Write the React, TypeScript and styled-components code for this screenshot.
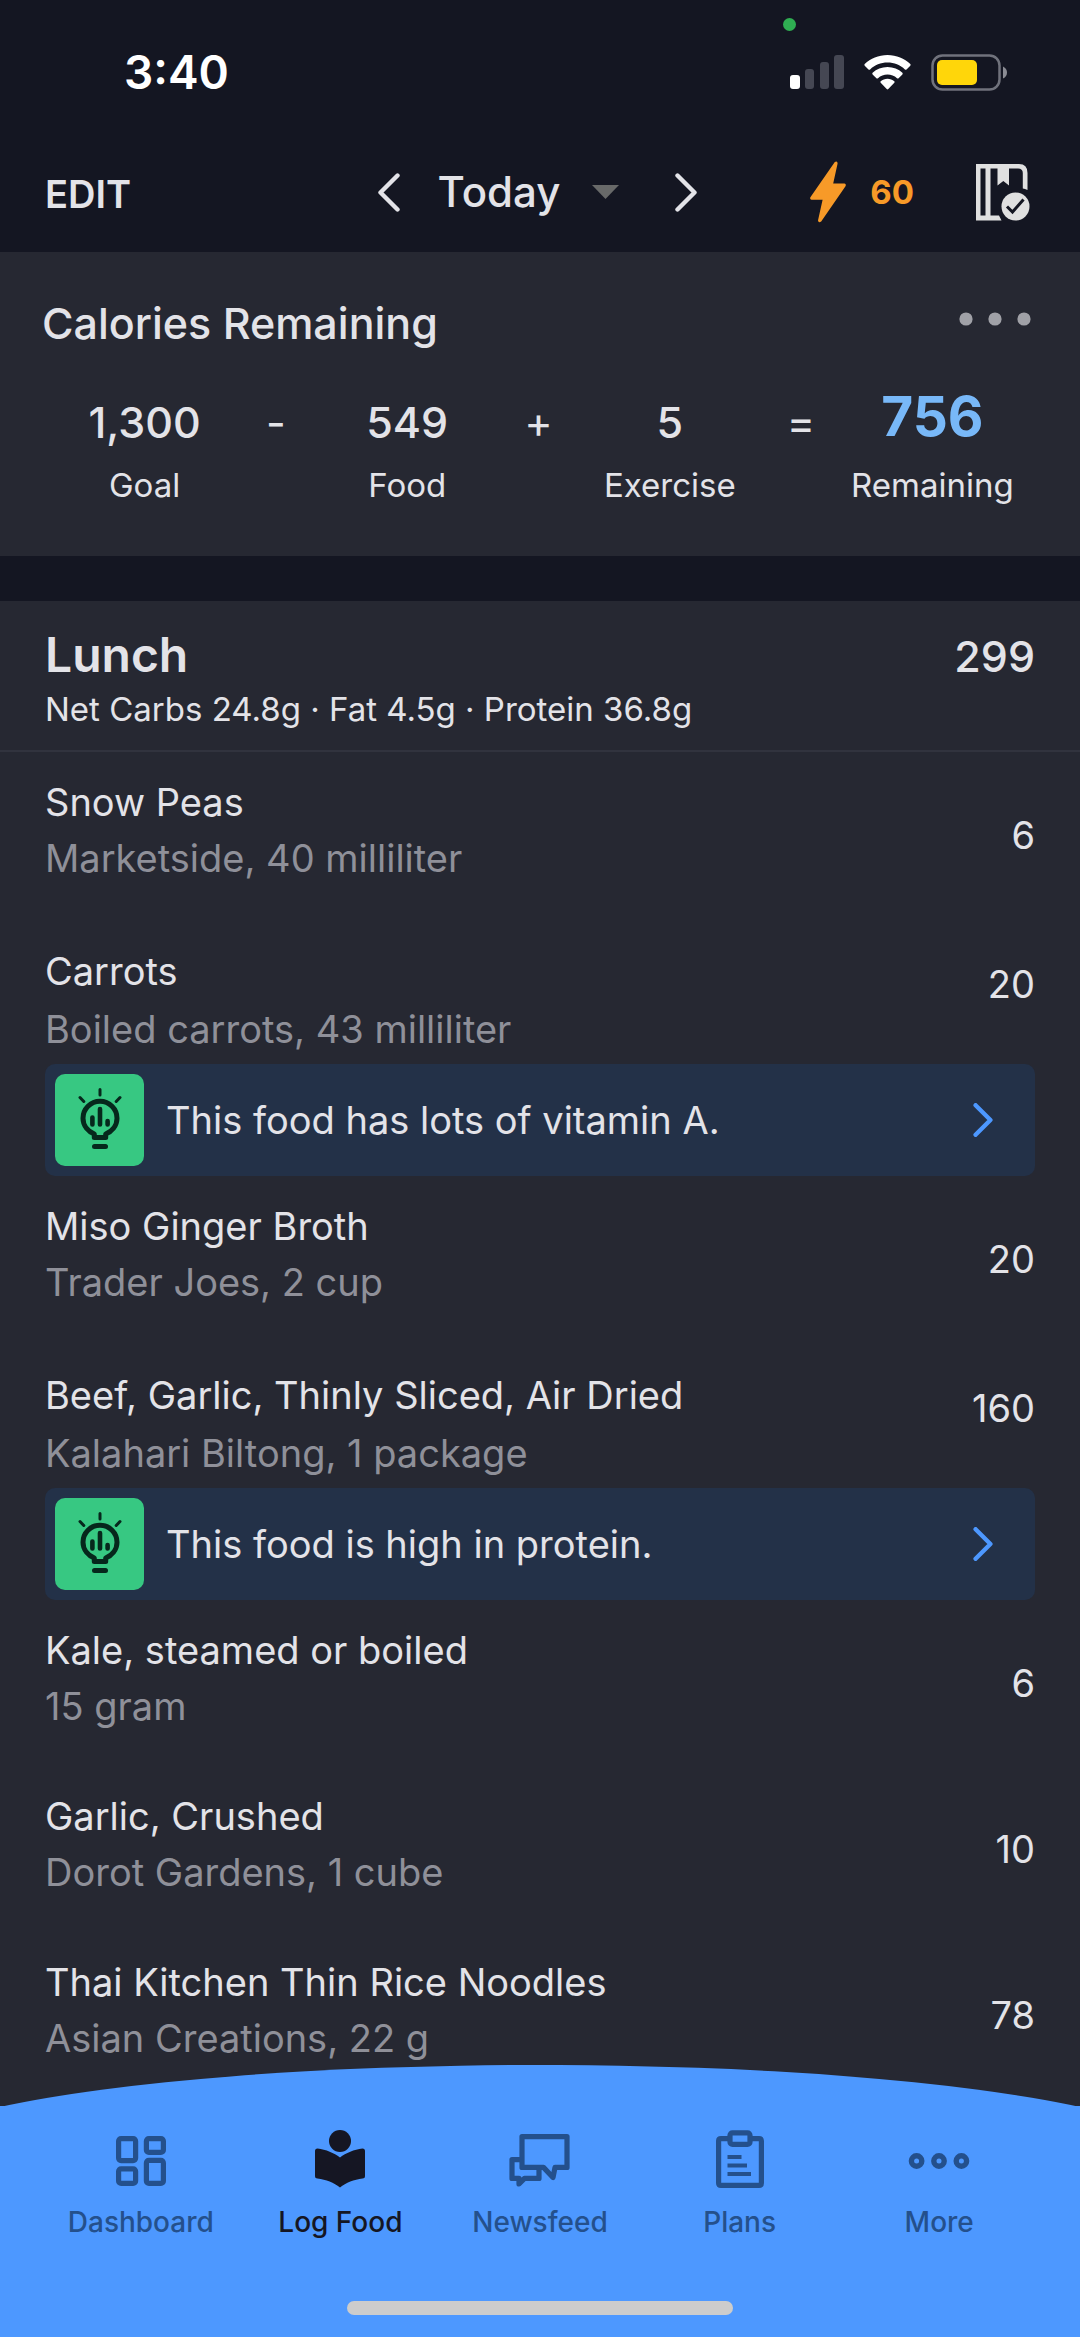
import React from "react";
import styled, { createGlobalStyle } from "styled-components";

const color = {
  bar: "#141622",
  card: "#262832",
  line: "#31333e",
  text: "#e3e3e8",
  muted: "#8f9099",
  accent: "#4d98ff",
  remaining: "#78b8f8",
  tip: "#233148",
  green: "#37c882",
  orange: "#f79a28",
  navIdle: "#24508c",
  navActive: "#151623",
};

const GlobalStyle = createGlobalStyle`
  *, *::before, *::after { box-sizing: border-box; }
  body {
    margin: 0;
    background: ${color.card};
    color: ${color.text};
    font-family: Inter, "Liberation Sans", sans-serif;
  }
  h1, h2, h3, p, ul { margin: 0; padding: 0; }
  button { margin: 0; padding: 0; border: 0; background: none; color: inherit; font: inherit; }
  svg { display: block; flex: none; }
`;

const Page = styled.div`
  display: flex;
  flex-direction: column;
  min-height: 100vh;
`;

const Header = styled.header`
  background: ${color.bar};
`;

const StatusBar = styled.div`
  position: relative;
  display: flex;
  align-items: center;
  justify-content: space-between;
  height: 144px;
  padding: 0 72px 0 124px;
`;

const Clock = styled.span`
  font-size: 46px;
  line-height: 56px;
  font-weight: 600;
  color: #fff;
`;

const StatusIcons = styled.div`
  display: flex;
  align-items: center;
  gap: 20px;
`;

const CameraDot = styled.span`
  position: absolute;
  top: 18px;
  right: 284px;
  width: 13px;
  height: 13px;
  border-radius: 50%;
  background: #2fae52;
`;

const Toolbar = styled.div`
  display: grid;
  grid-template-columns: 1fr auto 1fr;
  align-items: center;
  height: 108px;
  padding: 0 50px 12px 45px;
`;

const EditButton = styled.button`
  justify-self: start;
  padding-top: 4px;
  font-size: 38px;
  line-height: 48px;
  font-weight: 600;
`;

const DayPicker = styled.div`
  display: flex;
  align-items: center;
  gap: 38px;
`;

const DayButton = styled.button`
  display: flex;
  align-items: center;
  gap: 32px;
  padding-right: 18px;
  font-size: 42px;
  line-height: 48px;
  font-weight: 500;
`;

const ToolbarEnd = styled.div`
  justify-self: end;
  display: flex;
  align-items: center;
  gap: 62px;
`;

const Streak = styled.button`
  display: flex;
  align-items: center;
  gap: 24px;
  font-size: 33px;
  line-height: 48px;
  font-weight: 700;
  color: ${color.orange};
`;

const Summary = styled.section`
  padding: 43px 45px 47px 42px;
  border-bottom: 45px solid ${color.bar};
`;

const SummaryHead = styled.div`
  display: flex;
  justify-content: space-between;
  padding-right: 4px;
`;

const SummaryTitle = styled.h1`
  font-size: 43px;
  line-height: 56px;
  font-weight: 500;
`;

const MenuButton = styled.button`
  height: 48px;
`;

const Equation = styled.div`
  display: grid;
  grid-template-columns: repeat(7, minmax(0, 1fr));
  margin: 37px 37px 0;
`;

const Term = styled.div`
  display: flex;
  flex-direction: column;
  align-items: center;
  gap: 5px;
  white-space: nowrap;
`;

const TermValue = styled.strong<{ $result?: boolean }>`
  font-size: ${(p) => (p.$result ? 55 : 43)}px;
  line-height: ${(p) => (p.$result ? 56 : 68)}px;
  height: 68px;
  font-weight: ${(p) => (p.$result ? 700 : 500)};
  color: ${(p) => (p.$result ? color.remaining : "inherit")};
`;

const TermLabel = styled.span`
  font-size: 33px;
  line-height: 48px;
`;

const Operator = styled.span`
  justify-self: center;
  font-size: 43px;
  line-height: 68px;
`;

const MealHead = styled.div`
  display: grid;
  grid-template-columns: 1fr auto;
  padding: 24px 45px 17px;
  border-bottom: 2px solid ${color.line};
`;

const MealTitle = styled.h2`
  font-size: 48px;
  line-height: 60px;
  font-weight: 600;
`;

const MealTotal = styled.span`
  font-size: 43px;
  line-height: 62px;
  font-weight: 500;
`;

const Macros = styled.p`
  grid-column: 1 / -1;
  margin-top: -2px;
  font-size: 33px;
  line-height: 48px;
`;

const FoodList = styled.ul`
  list-style: none;
`;

const FoodItem = styled.li`
  padding: 0 45px;
`;

const FoodRow = styled.div`
  display: flex;
  align-items: center;
  justify-content: space-between;
`;

const FoodText = styled.div<{ $tip: boolean }>`
  font-size: 38px;
  line-height: ${(p) => (p.$tip ? 58 : 56)}px;
  padding: ${(p) => (p.$tip ? "24px 0 6px" : "22px 0 32px")};
`;

const FoodName = styled.h3`
  font: inherit;
`;

const FoodDetail = styled.p`
  color: ${color.muted};
`;

const FoodCalories = styled.span<{ $tip: boolean }>`
  font-size: 38px;
  line-height: 48px;
  padding-bottom: ${(p) => (p.$tip ? 14 : 0)}px;
`;

const Tip = styled.button`
  display: flex;
  align-items: center;
  width: 100%;
  padding: 10px 42px 10px 10px;
  border-radius: 10px;
  background: ${color.tip};
  font-size: 38px;
  line-height: 48px;
  text-align: left;
`;

const TipBadge = styled.span`
  display: grid;
  place-items: center;
  width: 89px;
  height: 92px;
  margin-right: 22px;
  border-radius: 10px;
  background: ${color.green};
`;

const TipText = styled.span`
  flex: 1;
`;

const TabBar = styled.nav`
  position: sticky;
  bottom: 0;
  margin-top: -33px;
`;

const TabArc = styled.svg`
  width: 100%;
  height: 42px;
  margin-bottom: -1px;
`;

const TabPanel = styled.div`
  padding: 24px 41px 22px;
  background: ${color.accent};
`;

const Tabs = styled.div`
  display: grid;
  grid-template-columns: repeat(5, 1fr);
`;

const Tab = styled.button<{ $active?: boolean }>`
  display: flex;
  flex-direction: column;
  align-items: center;
  gap: 10px;
  font-size: 28px;
  line-height: 40px;
  font-weight: 500;
  color: ${(p) => (p.$active ? color.navActive : color.navIdle)};
`;

const HomeIndicator = styled.div`
  width: 386px;
  height: 14px;
  margin: 59px auto 0;
  border-radius: 7px;
  background: #ccc;
`;

const SignalIcon = () => (
  <svg width="54" height="34" viewBox="0 0 54 34" fill="#454753">
    <rect x="0" y="20" width="10" height="14" rx="3" fill="#fff" />
    <rect x="15" y="14" width="9" height="20" rx="3" />
    <rect x="30" y="7" width="9" height="27" rx="3" />
    <rect x="44" y="0" width="10" height="34" rx="3" />
  </svg>
);

const WifiIcon = () => (
  <svg width="47" height="35" viewBox="0 0 47 35" fill="#fff">
    <path d="M23.5 0C32.5 0 40.5 3.5 46.3 9.1Q47 9.9 46.3 10.7L42.5 14.5Q41.7 15.2 40.9 14.5C36.3 10.2 30.2 7.6 23.5 7.6S10.7 10.2 6.1 14.5Q5.3 15.2 4.5 14.5L.7 10.7Q0 9.9 .7 9.1C6.5 3.5 14.5 0 23.5 0Z" />
    <path d="M23.5 12C29.3 12 34.5 14.2 38.4 17.8Q39.1 18.6 38.4 19.4L34.6 23.2Q33.8 23.9 33 23.2C30.4 21 27.1 19.6 23.5 19.6S16.6 21 14 23.2Q13.2 23.9 12.4 23.2L8.6 19.4Q7.9 18.6 8.6 17.8C12.5 14.2 17.7 12 23.5 12Z" />
    <path d="M23.5 23.8C26 23.8 28.5 24.7 30.3 26.2Q31.1 27 30.3 27.8L24.3 34Q23.5 34.8 22.7 34L16.7 27.8Q15.9 27 16.7 26.2C18.5 24.7 21 23.8 23.5 23.8Z" />
  </svg>
);

const BatteryIcon = () => (
  <svg width="77" height="37" viewBox="0 0 77 37">
    <rect x="1.5" y="1.5" width="67" height="34" rx="10" fill="none" stroke="#70727c" strokeWidth="2.5" />
    <rect x="6" y="6" width="40" height="25" rx="5" fill="#ffd60a" />
    <path d="M72 12.5Q76 14.5 76 18.5T72 24.5Z" fill="#8a8b93" />
  </svg>
);

const Chevron = ({ back, small }: { back?: boolean; small?: boolean }) => (
  <svg
    width={small ? 20 : 22}
    height={small ? 34 : 39}
    viewBox="0 0 22 39"
    fill="none"
    stroke={small ? color.accent : "currentColor"}
    strokeWidth={small ? 5 : 4.4}
    strokeLinecap="round"
    strokeLinejoin="round"
  >
    <path d={back ? "M19.5 2.5L2.5 19.5L19.5 36.5" : "M2.5 2.5L19.5 19.5L2.5 36.5"} />
  </svg>
);

const Caret = () => (
  <svg width="27" height="14" viewBox="0 0 27 14" fill="#686969">
    <path d="M0 0H27L13.5 14Z" />
  </svg>
);

const BoltIcon = () => (
  <svg width="36" height="62" viewBox="0 0 36 62" fill={color.orange}>
    <path d="M24.8 1Q27.5 -.5 27.6 2.5L23.2 22.5H34.5Q36.5 23 35.5 25.2L11.2 60.5Q8.5 62.5 8 59.5L12.6 38.8H1.5Q-.5 38.3 .4 36.2Z" />
  </svg>
);

const DiaryIcon = () => (
  <svg width="54" height="57" viewBox="0 0 54 57" fill="#e0e0e0">
    <path
      fillRule="evenodd"
      d="M0 0H43Q51.5 0 51.5 9V26Q49 24.5 46.8 24.5V9Q46.8 4.5 42 4.5H33V21.5L27.3 17L21.5 21.5V4.5H14.5V51.5H23L25.5 56.5H0ZM4.5 4.5V51.5H9.5V4.5Z"
    />
    <circle cx="39.5" cy="42.5" r="14" />
    <path d="M31 42.5L36.5 48L47.5 35.5" fill="none" stroke={color.bar} strokeWidth="3" />
  </svg>
);

const DotsIcon = () => (
  <svg width="72" height="14" viewBox="0 0 72 14" fill="#a0a1a7">
    <circle cx="7" cy="7" r="6.6" />
    <circle cx="36" cy="7" r="6.6" />
    <circle cx="65" cy="7" r="6.6" />
  </svg>
);

const BulbIcon = () => (
  <svg width="44" height="64" viewBox="0 0 44 64" fill="none" stroke="#06281c" strokeLinecap="round" strokeLinejoin="round">
    <path strokeWidth="3" d="M22 1.5V7M2 9.5L5.8 13.5M42 9.5L38.2 13.5" />
    <path strokeWidth="5" d="M16.3 49.5H27.7V46C33.5 43.5 39 38 39 30.2A17 17 0 0 0 5 30.2C5 38 10.5 43.5 16.3 46Z" />
    <path strokeWidth="5" d="M16.5 58.4H27.5" />
    <path strokeWidth="4.6" d="M14.4 29.5V36.4M22 21V36.4M29.6 33V36.4" />
  </svg>
);

const DashboardIcon = () => (
  <svg width="62" height="62" viewBox="0 0 62 62" fill="none" stroke="currentColor" strokeWidth="5.2">
    <rect x="8.6" y="8.6" width="17" height="22" rx="2.5" />
    <rect x="36.4" y="8.6" width="17" height="13.8" rx="2.5" />
    <rect x="8.6" y="38.8" width="17" height="14.6" rx="2.5" />
    <rect x="36.4" y="30.4" width="17" height="23" rx="2.5" />
  </svg>
);

const LogFoodIcon = () => (
  <svg width="62" height="62" viewBox="0 0 62 62" fill="currentColor">
    <circle cx="31" cy="11" r="11" />
    <path d="M31 27.5C25 23 17 19.500 8.5 18.5Q6 18.500 6 21V46Q6 48.5 8.500 48.5C17 49.5 25 52.5 31 57.500C37 52.5 45 49.5 53.5 48.5Q56 48.5 56 46V21Q56 18.5 53.5 18.5C45 19.5 37 23 31 27.5Z" />
  </svg>
);

const NewsfeedIcon = () => (
  <svg width="62" height="62" viewBox="0 0 62 62" fill="none" stroke="currentColor" strokeWidth="5.2" strokeLinejoin="round">
    <path d="M13 6.6H58V37.4H46L44 47.5L34.5 37.4H13Z" />
    <path d="M13 29.6H3V48.4H10V54L15.5 48.4H30V38" />
  </svg>
);

const PlansIcon = () => (
  <svg width="62" height="62" viewBox="0 0 62 62" fill="none" stroke="currentColor" strokeWidth="5.2">
    <path strokeLinejoin="round" d="M20 8.6H12Q9.6 8.6 9.6 11V53Q9.6 55.4 12 55.4H50Q52.4 55.4 52.4 53V11Q52.4 8.6 50 8.6H42" />
    <rect x="21" y="2.8" width="20" height="11.6" rx="2.5" />
    <path strokeWidth="4" d="M18.5 27H32.5M18.5 35.5H38M18.5 44H42" />
  </svg>
);

const MoreIcon = () => (
  <svg width="62" height="62" viewBox="0 0 62 62" fill="none" stroke="currentColor" strokeWidth="5.4">
    <circle cx="8.6" cy="31" r="5.2" />
    <circle cx="31" cy="31" r="5.2" />
    <circle cx="53.4" cy="31" r="5.2" />
  </svg>
);

const foods = [
  { name: "Snow Peas", detail: "Marketside, 40 milliliter", calories: 6 },
  { name: "Carrots", detail: "Boiled carrots, 43 milliliter", calories: 20, tip: "This food has lots of vitamin A." },
  { name: "Miso Ginger Broth", detail: "Trader Joes, 2 cup", calories: 20 },
  {
    name: "Beef, Garlic, Thinly Sliced, Air Dried",
    detail: "Kalahari Biltong, 1 package",
    calories: 160,
    tip: "This food is high in protein.",
  },
  { name: "Kale, steamed or boiled", detail: "15 gram", calories: 6 },
  { name: "Garlic, Crushed", detail: "Dorot Gardens, 1 cube", calories: 10 },
  { name: "Thai Kitchen Thin Rice Noodles", detail: "Asian Creations, 22 g", calories: 78 },
];

const tabs = [
  { label: "Dashboard", Icon: DashboardIcon },
  { label: "Log Food", Icon: LogFoodIcon, active: true },
  { label: "Newsfeed", Icon: NewsfeedIcon },
  { label: "Plans", Icon: PlansIcon },
  { label: "More", Icon: MoreIcon },
];

const SummaryTerm = ({ value, label, result }: { value: string; label: string; result?: boolean }) => (
  <Term>
    <TermValue $result={result}>{value}</TermValue>
    <TermLabel>{label}</TermLabel>
  </Term>
);

export default function App() {
  return (
    <Page>
      <GlobalStyle />
      <Header>
        <StatusBar>
          <Clock>3:40</Clock>
          <CameraDot />
          <StatusIcons>
            <SignalIcon />
            <WifiIcon />
            <BatteryIcon />
          </StatusIcons>
        </StatusBar>
        <Toolbar>
          <EditButton type="button">EDIT</EditButton>
          <DayPicker>
            <button type="button" aria-label="Previous day"><Chevron back /></button>
            <DayButton type="button">Today<Caret /></DayButton>
            <button type="button" aria-label="Next day"><Chevron /></button>
          </DayPicker>
          <ToolbarEnd>
            <Streak type="button"><BoltIcon />60</Streak>
            <button type="button" aria-label="Complete diary"><DiaryIcon /></button>
          </ToolbarEnd>
        </Toolbar>
      </Header>

      <main>
        <Summary>
          <SummaryHead>
            <SummaryTitle>Calories Remaining</SummaryTitle>
            <MenuButton type="button" aria-label="Summary options"><DotsIcon /></MenuButton>
          </SummaryHead>
          <Equation>
            <SummaryTerm value="1,300" label="Goal" />
            <Operator>-</Operator>
            <SummaryTerm value="549" label="Food" />
            <Operator>+</Operator>
            <SummaryTerm value="5" label="Exercise" />
            <Operator>=</Operator>
            <SummaryTerm value="756" label="Remaining" result />
          </Equation>
        </Summary>

        <section>
          <MealHead>
            <MealTitle>Lunch</MealTitle>
            <MealTotal>299</MealTotal>
            <Macros>Net Carbs 24.8g · Fat 4.5g · Protein 36.8g</Macros>
          </MealHead>
          <FoodList>
            {foods.map(({ name, detail, calories, tip }) => (
              <FoodItem key={name}>
                <FoodRow>
                  <FoodText $tip={!!tip}>
                    <FoodName>{name}</FoodName>
                    <FoodDetail>{detail}</FoodDetail>
                  </FoodText>
                  <FoodCalories $tip={!!tip}>{calories}</FoodCalories>
                </FoodRow>
                {tip && (
                  <Tip type="button">
                    <TipBadge><BulbIcon /></TipBadge>
                    <TipText>{tip}</TipText>
                    <Chevron small />
                  </Tip>
                )}
              </FoodItem>
            ))}
          </FoodList>
        </section>
      </main>

      <TabBar>
        <TabArc viewBox="0 0 1080 42" preserveAspectRatio="none" fill={color.accent}>
          <path d="M0 42A648 94 0 0 1 1080 42Z" />
        </TabArc>
        <TabPanel>
          <Tabs>
            {tabs.map(({ label, Icon, active }) => (
              <Tab key={label} type="button" $active={active} aria-current={active ? "page" : undefined}>
                <Icon />
                {label}
              </Tab>
            ))}
          </Tabs>
          <HomeIndicator />
        </TabPanel>
      </TabBar>
    </Page>
  );
}
